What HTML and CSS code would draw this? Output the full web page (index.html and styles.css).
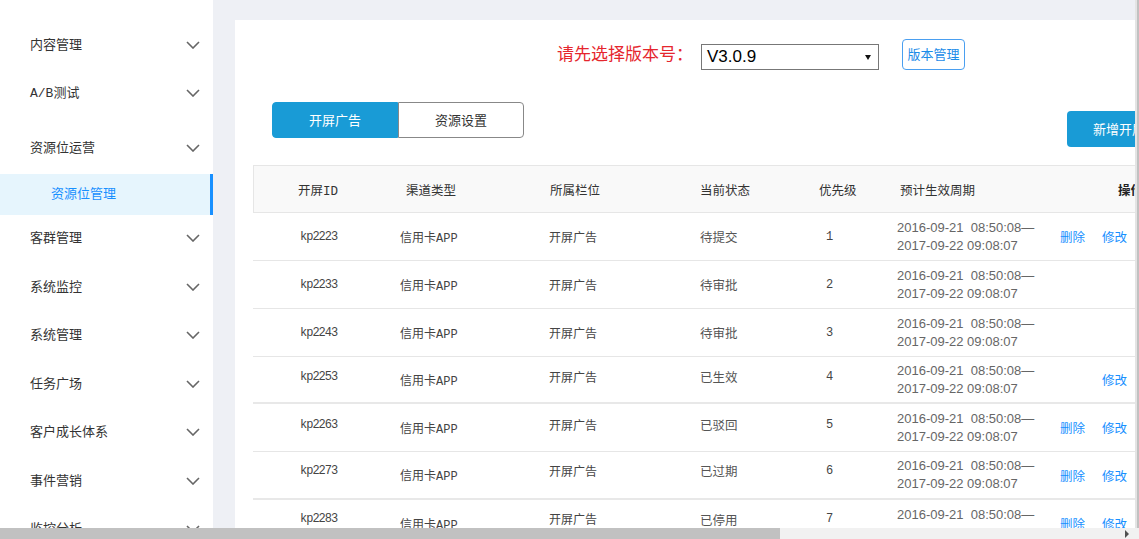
FILE: index.html
```html
<!DOCTYPE html>
<html lang="zh-CN">
<head>
<meta charset="utf-8">
<title>资源位管理</title>
<link rel="stylesheet" href="styles.css">
</head>
<body>
<div class="app">
  <aside class="sidebar">
    <nav class="menu">
      <div class="menu-item">内容管理<svg class="chev" width="14" height="8" viewBox="0 0 14 8"><path d="M1 1 L7 7 L13 1" /></svg></div>
      <div class="menu-item">A/B测试<svg class="chev" width="14" height="8" viewBox="0 0 14 8"><path d="M1 1 L7 7 L13 1" /></svg></div>
      <div class="menu-item group">资源位运营<svg class="chev" width="14" height="8" viewBox="0 0 14 8"><path d="M1 1 L7 7 L13 1" /></svg></div>
      <div class="submenu-item active">资源位管理</div>
      <div class="menu-item">客群管理<svg class="chev" width="14" height="8" viewBox="0 0 14 8"><path d="M1 1 L7 7 L13 1" /></svg></div>
      <div class="menu-item">系统监控<svg class="chev" width="14" height="8" viewBox="0 0 14 8"><path d="M1 1 L7 7 L13 1" /></svg></div>
      <div class="menu-item">系统管理<svg class="chev" width="14" height="8" viewBox="0 0 14 8"><path d="M1 1 L7 7 L13 1" /></svg></div>
      <div class="menu-item">任务广场<svg class="chev" width="14" height="8" viewBox="0 0 14 8"><path d="M1 1 L7 7 L13 1" /></svg></div>
      <div class="menu-item">客户成长体系<svg class="chev" width="14" height="8" viewBox="0 0 14 8"><path d="M1 1 L7 7 L13 1" /></svg></div>
      <div class="menu-item">事件营销<svg class="chev" width="14" height="8" viewBox="0 0 14 8"><path d="M1 1 L7 7 L13 1" /></svg></div>
      <div class="menu-item">监控分析<svg class="chev" width="14" height="8" viewBox="0 0 14 8"><path d="M1 1 L7 7 L13 1" /></svg></div>
    </nav>
  </aside>
  <main class="main">
    <section class="card">
      <div class="toolbar">
        <span class="version-label">请先选择版本号：</span>
        <div class="select"><span class="select-value">V3.0.9</span><span class="caret"></span></div>
        <button class="btn-outline">版本管理</button>
      </div>
      <div class="tabs-row">
        <div class="tabs">
          <button class="tab tab-active">开屏广告</button>
          <button class="tab">资源设置</button>
        </div>
        <button class="btn-add">新增开屏广告</button>
      </div>
      <div class="table">
        <div class="row head">
          <div class="h1">开屏ID</div>
          <div class="h2">渠道类型</div>
          <div class="h3">所属栏位</div>
          <div class="h4">当前状态</div>
          <div class="h5">优先级</div>
          <div class="h6">预计生效周期</div>
          <div class="h7">操作</div>
        </div>
        <div class="row">
          <div class="c1">kp2223</div><div class="c2">信用卡APP</div><div class="c3">开屏广告</div><div class="c4">待提交</div><div class="c5">1</div>
          <div class="c6"><span>2016-09-21&nbsp;&nbsp;08:50:08—</span><span>2017-09-22 09:08:07</span></div>
          <div class="c7"><a class="act">删除</a><a class="act">修改</a></div>
        </div>
        <div class="row">
          <div class="c1">kp2233</div><div class="c2">信用卡APP</div><div class="c3">开屏广告</div><div class="c4">待审批</div><div class="c5">2</div>
          <div class="c6"><span>2016-09-21&nbsp;&nbsp;08:50:08—</span><span>2017-09-22 09:08:07</span></div>
          <div class="c7"></div>
        </div>
        <div class="row">
          <div class="c1">kp2243</div><div class="c2">信用卡APP</div><div class="c3">开屏广告</div><div class="c4">待审批</div><div class="c5">3</div>
          <div class="c6"><span>2016-09-21&nbsp;&nbsp;08:50:08—</span><span>2017-09-22 09:08:07</span></div>
          <div class="c7"></div>
        </div>
        <div class="row thick short raised">
          <div class="c1">kp2253</div><div class="c2">信用卡APP</div><div class="c3">开屏广告</div><div class="c4">已生效</div><div class="c5">4</div>
          <div class="c6"><span>2016-09-21&nbsp;&nbsp;08:50:08—</span><span>2017-09-22 09:08:07</span></div>
          <div class="c7 only-edit"><a class="act">修改</a></div>
        </div>
        <div class="row raised">
          <div class="c1">kp2263</div><div class="c2">信用卡APP</div><div class="c3">开屏广告</div><div class="c4">已驳回</div><div class="c5">5</div>
          <div class="c6"><span>2016-09-21&nbsp;&nbsp;08:50:08—</span><span>2017-09-22 09:08:07</span></div>
          <div class="c7"><a class="act">删除</a><a class="act">修改</a></div>
        </div>
        <div class="row thick raised more">
          <div class="c1">kp2273</div><div class="c2">信用卡APP</div><div class="c3">开屏广告</div><div class="c4">已过期</div><div class="c5">6</div>
          <div class="c6"><span>2016-09-21&nbsp;&nbsp;08:50:08—</span><span>2017-09-22 09:08:07</span></div>
          <div class="c7"><a class="act">删除</a><a class="act">修改</a></div>
        </div>
        <div class="row raised more">
          <div class="c1">kp2283</div><div class="c2">信用卡APP</div><div class="c3">开屏广告</div><div class="c4">已停用</div><div class="c5">7</div>
          <div class="c6"><span>2016-09-21&nbsp;&nbsp;08:50:08—</span><span>2017-09-22 09:08:07</span></div>
          <div class="c7"><a class="act">删除</a><a class="act">修改</a></div>
        </div>
      </div>
    </section>
  </main>
</div>
<div class="vscroll"></div>
<div class="hscroll"><div class="hscroll-thumb"></div><span class="hscroll-arrow"></span></div>
</body>
</html>
```

FILE: styles.css
```css
* { box-sizing: border-box; }
html, body {
  margin: 0;
  padding: 0;
  width: 1139px;
  height: 539px;
  overflow: hidden;
  background: #eef0f5;
  font-family: "Liberation Mono", "Noto Sans CJK SC", monospace;
  color: #333;
}
.app {
  display: flex;
  width: 1139px;
  height: 539px;
}
.sidebar {
  width: 213px;
  flex: 0 0 213px;
  background: #fff;
  height: 539px;
  overflow: hidden;
}
.menu {
  padding-top: 21px;
  display: flex;
  flex-direction: column;
}
.menu-item {
  height: 48.5px;
  flex: 0 0 auto;
  display: flex;
  align-items: center;
  justify-content: space-between;
  padding: 0 13px 4px 30px;
  font-size: 13px;
  color: #333;
}
.menu-item.group { margin-top: 6px; }
.chev { margin-top: 3px; }
.chev path {
  fill: none;
  stroke: #666;
  stroke-width: 1.6;
}
.submenu-item {
  height: 41px;
  flex: 0 0 auto;
  margin-top: 1px;
  display: flex;
  align-items: center;
  padding-left: 51px;
  padding-bottom: 3px;
  font-size: 13px;
}
.submenu-item.active {
  background: #e6f5fd;
  color: #1890ff;
  border-right: 3px solid #1890ff;
}
.main {
  flex: 1 1 auto;
  min-width: 0;
  padding: 20px 0 0 22px;
  overflow: hidden;
}
.card {
  background: #fff;
  height: 560px;
  padding-top: 19px;
  overflow: hidden;
}
.toolbar {
  display: flex;
  align-items: flex-end;
  padding-left: 322px;
  height: 31px;
}
.version-label {
  align-self: center;
  font-family: "Noto Sans CJK SC", sans-serif;
  font-size: 17px;
  color: #e5262d;
  line-height: 20px;
  margin-bottom: 3px;
}
.select {
  margin-left: 8px;
  width: 178px;
  height: 26px;
  border: 1px solid #777;
  display: flex;
  align-items: center;
  justify-content: space-between;
  padding: 0 7px 0 5px;
}
.select-value {
  font-family: "Liberation Sans", Arial, sans-serif;
  font-size: 17px;
  color: #000;
}
.caret {
  width: 0;
  height: 0;
  border-left: 3px solid transparent;
  border-right: 3px solid transparent;
  border-top: 5px solid #111;
  margin-top: 1px;
}
.btn-outline {
  margin-left: 23px;
  width: 63px;
  height: 31px;
  border: 1px solid #4a9ff0;
  border-radius: 4px;
  background: #fff;
  color: #1c8ce8;
  font-family: "Noto Sans CJK SC", sans-serif;
  font-size: 13px;
  padding: 0 0 2px;
}
.tabs-row {
  display: flex;
  align-items: flex-start;
  margin-top: 32px;
  padding-left: 37px;
}
.tabs { display: flex; }
.tab {
  width: 126px;
  height: 36px;
  padding: 0 0 2px;
  border: 1px solid #888;
  background: #fff;
  font-family: "Noto Sans CJK SC", sans-serif;
  font-size: 13px;
  color: #333;
  border-radius: 0 4px 4px 0;
}
.tab.tab-active {
  background: #199bd6;
  border-color: #199bd6;
  color: #fff;
  border-radius: 4px 0 0 4px;
}
.btn-add {
  margin-top: 9px;
  margin-left: 543px;
  height: 36px;
  flex: 0 0 auto;
  padding: 0 26px 2px;
  border: none;
  border-radius: 4px;
  background: #199bd6;
  color: #fff;
  font-family: "Noto Sans CJK SC", sans-serif;
  font-size: 13px;
  white-space: nowrap;
}
.table {
  margin-top: 18px;
  margin-left: 18px;
  width: 1002px;
}
.row {
  display: grid;
  grid-template-columns: 142px 150px 150px 120px 78px 162px 200px;
  height: 48px;
  border-bottom: 1px solid #e6e6e6;
  align-items: center;
  font-size: 12px;
  color: #444;
}
.row.short { height: 47px; }
.row.thick { border-bottom: 2px solid #e8e8e8; }
.row.head {
  background: #f9f9f9;
  border-top: 1px solid #e6e6e6;
  border-left: 1px solid #e6e6e6;
  height: 48px;
  font-size: 12.5px;
  color: #333;
}
.h1 { padding-left: 44px; }
.h2 { padding-left: 10px; }
.h3 { padding-left: 4px; }
.h4 { padding-left: 4px; }
.h5 { padding-left: 3px; }
.h6 { padding-left: 6px; }
.h7 { padding-left: 62px; font-weight: bold; color: #222; }
.c1 { padding-left: 47px; font-size: 12px; letter-spacing: -1px; }
.c2 { padding-left: 5px; }
.c3 { padding-left: 4px; }
.c4 { padding-left: 5px; font-size: 12.5px; color: #555; }
.c5 { padding-left: 11px; font-size: 12px; }
.row.raised .c1,
.row.raised .c3,
.row.raised .c4,
.row.raised .c5 { padding-bottom: 6px; }
.row.raised.more .c1,
.row.raised.more .c3,
.row.raised.more .c4,
.row.raised.more .c5 { padding-bottom: 9px; }
.c6 {
  padding-left: 4px;
  display: flex;
  flex-direction: column;
  font-family: "Liberation Sans", Arial, sans-serif;
  font-size: 13px;
  line-height: 18px;
  color: #666;
  white-space: nowrap;
}
.c7 {
  padding-left: 5px;
  display: flex;
  gap: 17px;
}
.c7.only-edit { padding-left: 47px; }
.act {
  font-family: "Noto Sans CJK SC", sans-serif;
  font-size: 12.5px;
  color: #1890ff;
}
.vscroll {
  position: fixed;
  top: 0;
  right: 0;
  width: 4px;
  height: 528px;
  background: #c1c1c1;
  border-left: 2px solid #e4e4e4;
}
.hscroll {
  position: fixed;
  left: 0;
  bottom: 0;
  width: 1139px;
  height: 11px;
  background: #f1f1f1;
  display: flex;
  align-items: center;
}
.hscroll-thumb {
  width: 780px;
  height: 11px;
  background: #c1c1c1;
}
.hscroll-arrow {
  margin-left: 345px;
  width: 0;
  height: 0;
  border-top: 4px solid transparent;
  border-bottom: 4px solid transparent;
  border-left: 4px solid #505050;
}
```
